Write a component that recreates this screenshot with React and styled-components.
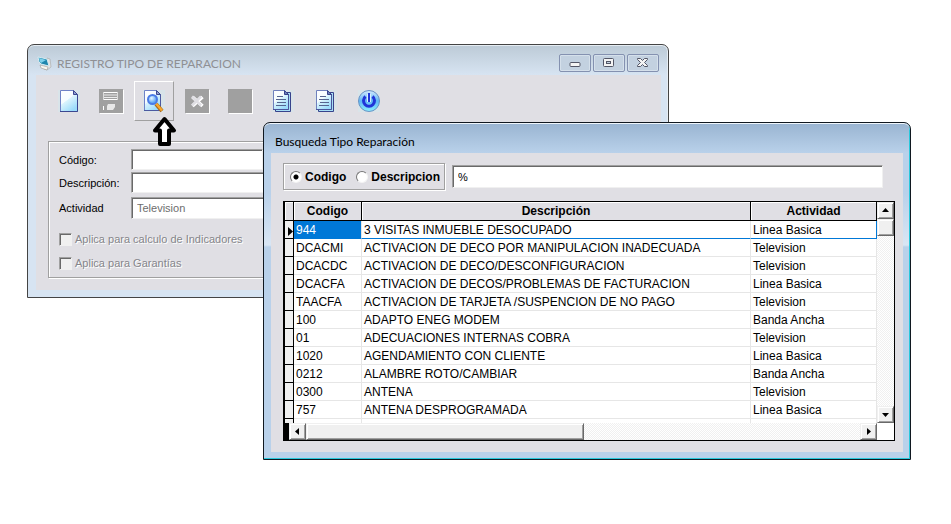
import React, { useState } from "react";
import styled, { createGlobalStyle, css } from "styled-components";

const GlobalStyle = createGlobalStyle`
  *, *::before, *::after { box-sizing: border-box; }
  body { margin: 0; background: #fff; }
  button, input { font: inherit; }
`;

const uiFont = `Lato, "Open Sans", sans-serif`;
const sans = `"Liberation Sans", Arial, sans-serif`;

const Desktop = styled.main`
  position: relative;
  min-height: 100vh;
  min-width: 720px;
  background: #fff;
  font: 12px/16px ${sans};
  color: #000;
`;

const Window = styled.section`
  position: absolute;
  border: 1px solid #444;
  border-radius: 7px 7px 0 0;
  padding: 0 7px 7px 8px;
`;

const MainWindow = styled(Window)`
  top: 44px;
  left: 27px;
  right: 282px;
  background: linear-gradient(#bccad6, #d7e4f2 30px);
  box-shadow: inset 0 1px #e6edf3, inset -1px 0 #e6edf3;
`;

const SearchWindow = styled(Window)`
  top: 122px;
  left: 263px;
  right: 40px;
  border-color: #101820;
  padding-left: 7px;
  background: linear-gradient(#99b4d1, #b9d1ea 30px, #b9d1ea 70px, #d9e6f4 122px, #b9d1ea 124px);
  box-shadow: inset 0 1px #eef5fb, inset -1px -1px #28c8dc;
`;

const TitleBar = styled.header`
  display: flex;
  align-items: center;
  height: 30px;
  font: 12px/16px ${uiFont};
`;

const MainTitle = styled.h1`
  flex: 1;
  margin: 0 0 0 5px;
  padding-top: 8px;
  font: inherit;
  color: #8f9094;
`;

const SearchTitle = styled.h2`
  margin: 0 4px;
  padding-top: 8px;
  font: inherit;
`;

const AppIcon = styled.svg`
  margin: 7px 0 0 1px;
`;

const CaptionButtons = styled.div`
  display: flex;
  gap: 2px;
  padding: 6px 2px 0 0;
`;

const CaptionButton = styled.button`
  display: grid;
  place-items: center;
  width: 32px;
  height: 18px;
  padding: 0;
  border: 1px solid #8491b0;
  border-radius: 2px;
  background: #c3d1e0;
  box-shadow: inset 0 0 0 1px #d5e0eb;
`;

const Client = styled.div`
  background: #e0dfe4;
`;

const MainClient = styled(Client)`
  padding: 6px 12px 12px;
`;

const Toolbar = styled.div`
  display: flex;
  gap: 3px;
  padding-bottom: 20px;
`;

const ToolButton = styled.button`
  display: grid;
  place-items: center;
  width: 40px;
  height: 40px;
  padding: 0;
  border: 1px solid transparent;
  background: none;
  ${(p) => p.$raised && css`border-color: #fff #a0a0a0 #a0a0a0 #fff;`}
`;

const GroupBox = styled.div`
  border: 1px solid #a0a0a0;
  box-shadow: 1px 1px #fff, inset 1px 1px #fff;
  padding: 7px 12px 2px 10px;
  font: 11px/16px ${sans};
`;

const Field = styled.div`
  display: grid;
  grid-template-columns: 72px minmax(0, ${(p) => p.$width || "1fr"});
  align-items: center;
  margin-bottom: ${(p) => p.$gap || 2}px;
`;

const sunken = css`
  border: 1px solid;
  border-color: #a0a0a0 #f0f0f0 #f0f0f0 #a0a0a0;
  box-shadow: inset 1px 1px #696969;
  border-radius: 0;
  background: #fff;
  outline: none;
`;

const TextBox = styled.input`
  ${sunken}
  width: 100%;
  min-width: 0;
  height: ${(p) => p.$height || 21}px;
  padding: 0 5px;
  color: #000;
  font-size: 11px;
  &:disabled { color: #6d6d6d; }
`;

const Check = styled.label`
  display: flex;
  align-items: center;
  gap: 3px;
  height: 24px;
  color: #85858a;
  text-shadow: 1px 1px #fff;
`;

const CheckBox = styled.input`
  ${sunken}
  appearance: none;
  width: 13px;
  height: 13px;
  margin: 0;
  background: #f0f0f0;
`;

const Pointer = styled.svg`
  position: absolute;
  top: 116px;
  left: 153px;
`;

const SearchClient = styled(Client)`
  padding: 10px 8px 11px 12px;
`;

const SearchBar = styled.div`
  display: flex;
  align-items: center;
  gap: 7px;
  padding-right: 12px;
`;

const RadioBox = styled.fieldset`
  display: flex;
  align-items: center;
  gap: 10px;
  height: 27px;
  margin: 0;
  padding: 0 4px 0 6px;
  border: 1px solid #a0a0a0;
  box-shadow: 1px 1px #fff, inset 1px 1px #fff;
  font-weight: 700;
`;

const RadioLabel = styled.label`
  display: flex;
  align-items: center;
  gap: 3px;
`;

const Radio = styled.input`
  appearance: none;
  width: 12px;
  height: 12px;
  margin: 0;
  border: 1px solid;
  border-color: #777 #f4f4f4 #f4f4f4 #777;
  border-radius: 50%;
  background: #fff;
  &:checked { background: radial-gradient(circle, #000 0 2px, #fff 3px); }
`;

const GridFrame = styled.div`
  display: grid;
  grid-template-columns: minmax(0, 1fr) 17px;
  margin-top: 11px;
  border: 1px solid #000;
  border-left-width: 2px;
  background: #fff;
`;

const Table = styled.table`
  width: 100%;
  table-layout: fixed;
  border-collapse: separate;
  border-spacing: 0;
`;

const Col = styled.col`
  width: ${(p) => p.$width};
`;

const HeadCell = styled.th`
  height: 19px;
  padding: 0;
  border-right: 1px solid #000;
  border-bottom: 1px solid #000;
  background: #e0dfe4;
  box-shadow: inset 1px 1px #fff;
  line-height: 16px;
`;

const Marker = styled.td`
  height: 18px;
  padding: 0;
  border-right: 1px solid #000;
  border-bottom: 1px solid #000;
  background: #f0f0f0;
  svg { display: block; margin: 3px 0 0 3px; }
`;

const Cell = styled.td`
  height: 18px;
  padding: 0 2px;
  border-right: 1px solid #e6e6e6;
  border-bottom: 1px solid #e6e6e6;
  overflow: hidden;
  white-space: nowrap;
  line-height: 16px;
  ${(p) => p.$current && css`
    border-bottom-color: #0078d7;
    &:last-child { border-right-color: #0078d7; }
  `}
  ${(p) => p.$selected && css`background: #0078d7; color: #fff;`}
`;

const StubCell = styled.td`
  height: 4px;
  padding: 0;
  border-right: 1px solid ${(p) => (p.$marker ? "#000" : "#e6e6e6")};
  background: ${(p) => (p.$marker ? "#f0f0f0" : "#fff")};
`;

const track = css`
  background: repeating-conic-gradient(#f0f0f0 0 25%, #fff 0 50%) 0 0 / 2px 2px;
`;

const raised = css`
  border: 1px solid;
  border-color: #f0f0f0 #696969 #696969 #f0f0f0;
  box-shadow: inset 1px 1px #fff, inset -1px -1px #a0a0a0;
  background: #f0f0f0;
`;

const VScroll = styled.div`
  display: flex;
  flex-direction: column;
  ${track}
`;

const HScroll = styled.div`
  display: flex;
  ${track}
`;

const ScrollButton = styled.button`
  ${raised}
  display: grid;
  place-items: center;
  flex: none;
  width: 17px;
  height: 17px;
  padding: 0;
  ${(p) => p.$end && css`margin-${p.$end}: auto;`}
`;

const VThumb = styled.div`
  ${raised}
  height: 17px;
`;

const HThumb = styled.div`
  ${raised}
  width: 47%;
`;

const HScrollStart = styled.div`
  width: 4px;
  background: #000;
`;

function Triangle({ dir }) {
  const d = {
    up: "M1 6h7L4.500 2z",
    down: "M1 3h7L4.500 7z",
    left: "M6 1v7L2 4.500z",
    right: "M3 1v7L7 4.500z",
  }[dir];
  return <svg width="9" height="9" viewBox="0 0 9 9"><path d={d} /></svg>;
}

function SheetDefs() {
  return (
    <svg width="0" height="0" style={undefined} aria-hidden="true">
      <defs>
        <linearGradient id="sheet" x1="0" y1="0" x2=".6" y2="1">
          <stop offset="0" stopColor="#fff" />
          <stop offset=".5" stopColor="#f5fcff" />
          <stop offset=".52" stopColor="#dcf4fd" />
          <stop offset="1" stopColor="#9bdcfb" />
        </linearGradient>
        <radialGradient id="lens" cx=".4" cy=".35">
          <stop offset="0" stopColor="#eafaff" />
          <stop offset="1" stopColor="#63a9f5" />
        </radialGradient>
        <linearGradient id="power" x1="0" y1="0" x2="0" y2="1">
          <stop offset="0" stopColor="#d4ecff" />
          <stop offset=".5" stopColor="#5fb7f5" />
          <stop offset="1" stopColor="#8cf0ff" />
        </linearGradient>
      </defs>
    </svg>
  );
}

const HiddenDefs = styled.div`
  position: absolute;
  width: 0;
  height: 0;
  overflow: hidden;
`;

function NewIcon() {
  return (
    <svg width="24" height="24" viewBox="0 0 24 24">
      <path d="M2 1h22v22H2z" fill="#d3e7ec" opacity=".6" />
      <path d="M4.500 1.500h13l4 4v17h-17z" fill="url(#sheet)" stroke="#6f82c6" />
      <path d="M4 22.500h17.500V6" fill="none" stroke="#3b4790" />
      <path d="M17.500 1.500v4h4z" fill="#8f9fd0" stroke="#3b4790" />
    </svg>
  );
}

function SearchIcon() {
  return (
    <svg width="24" height="24" viewBox="0 0 24 24">
      <path d="M1 1h22v22H1z" fill="#d3e7ec" opacity=".6" />
      <path d="M2.500 1.500h12l4 4v16h-16z" fill="url(#sheet)" stroke="#6f82c6" />
      <path d="M2 21.500h16.500V6" fill="none" stroke="#4c59a0" />
      <path d="M14.500 1.500v4h4z" fill="#8f9fd0" stroke="#3b4790" />
      <path d="M14 15l6 7" stroke="#a5641a" strokeWidth="4" />
      <path d="M14 14.500l6 7" stroke="#f7a72b" strokeWidth="2.500" />
      <circle cx="10.500" cy="10.500" r="4.500" fill="url(#lens)" stroke="#4a7be6" strokeWidth="2" />
    </svg>
  );
}

function DocsIcon() {
  return (
    <svg width="24" height="24" viewBox="0 0 24 24">
      <path d="M1 1h22v22H1z" fill="#d3e7ec" opacity=".5" />
      <path d="M4.500 3.500h15v19h-15z" fill="#a7def5" stroke="#37438c" />
      <path d="M2.500 1.500h11l4 4v15h-15z" fill="url(#sheet)" stroke="#7080bd" />
      <path d="M2 20.500h15.500V5" fill="none" stroke="#4a569c" />
      <path d="M13.500 1.500v4h4z" fill="#6f7fb8" stroke="#37438c" />
      <path d="M6 7.500h6M5 10.500h10M6 13.500h9M5 16.500h10" stroke="#56648f" />
    </svg>
  );
}

function DisabledIcon({ kind }) {
  return (
    <svg width="25" height="25" viewBox="0 0 25 25">
      <path d="M1 1h24v24H1z" fill="#fff" />
      <path d="M0 0h24v24H0z" fill="#a0a0a0" />
      {kind === "save" && (
        <>
          <path d="M4 3.500h15M4 10.500h15" stroke="#fff" />
          <path d="M5 6h13M5 8.500h13" stroke="#ececec" />
          <path d="M4.500 3v8M18.500 3v8" stroke="#dcdcdc" />
          <path d="M9 15h7v3l-2 3H8v-4z" fill="#e8e8e8" />
          <path d="M4.500 17v4" stroke="#fff" />
        </>
      )}
      {kind === "delete" && (
        <>
          <path d="M7.500 8l10 9M17.500 8l-10 9" stroke="#fff" strokeWidth="3.500" />
          <path d="M7 7.500l9 9M16 7.500l-9 9" stroke="#e0dfe4" strokeWidth="2.500" />
        </>
      )}
    </svg>
  );
}

function PowerIcon() {
  return (
    <svg width="24" height="24" viewBox="0 0 24 24">
      <path d="M1 1h22v22H1z" fill="#d3e7ec" opacity=".6" />
      <circle cx="12" cy="12" r="10.500" fill="url(#power)" stroke="#6a92c4" />
      <path d="M8.500 7.500a5.500 5.500 0 1 0 7 0" fill="none" stroke="#2036d8" strokeWidth="3" />
      <path d="M12 5v8" stroke="#d9efff" strokeWidth="4" />
      <path d="M12 4v9" stroke="#2036d8" strokeWidth="2" />
    </svg>
  );
}

const tools = [
  { label: "Nuevo", icon: <NewIcon /> },
  { label: "Guardar", icon: <DisabledIcon kind="save" /> },
  { label: "Buscar", icon: <SearchIcon />, raised: true },
  { label: "Eliminar", icon: <DisabledIcon kind="delete" /> },
  { label: "Imprimir", icon: <DisabledIcon /> },
  { label: "Reporte", icon: <DocsIcon /> },
  { label: "Listado", icon: <DocsIcon /> },
  { label: "Salir", icon: <PowerIcon /> },
];

const rows = [
  ["944", "3 VISITAS INMUEBLE DESOCUPADO", "Linea Basica"],
  ["DCACMI", "ACTIVACION DE DECO POR MANIPULACION INADECUADA", "Television"],
  ["DCACDC", "ACTIVACION DE DECO/DESCONFIGURACION", "Television"],
  ["DCACFA", "ACTIVACION DE DECOS/PROBLEMAS DE FACTURACION", "Linea Basica"],
  ["TAACFA", "ACTIVACION DE TARJETA /SUSPENCION DE NO PAGO", "Television"],
  ["100", "ADAPTO ENEG MODEM", "Banda Ancha"],
  ["01", "ADECUACIONES INTERNAS COBRA", "Television"],
  ["1020", "AGENDAMIENTO CON CLIENTE", "Linea Basica"],
  ["0212", "ALAMBRE ROTO/CAMBIAR", "Banda Ancha"],
  ["0300", "ANTENA", "Television"],
  ["757", "ANTENA DESPROGRAMADA", "Linea Basica"],
];

function RegisterWindow() {
  return (
    <MainWindow>
      <TitleBar>
        <AppIcon width="15" height="15" viewBox="0 0 15 15">
          <path d="M10 2l3 1 1 8-4 3-3-1z" fill="#e4e4e4" stroke="#9a9a98" strokeWidth=".5" />
          <path d="M3 9l8 2-1 3-6-2z" fill="#f8f6f0" stroke="#8f8c86" strokeWidth=".5" />
          <path d="M1 1l9 2 2 7-8-2-2-2z" fill="#1f86ad" stroke="#d5ecf3" />
          <path d="M2 2l7 2-5 3-1-1z" fill="#7fd0ea" />
        </AppIcon>
        <MainTitle>REGISTRO TIPO DE REPARACION</MainTitle>
        <CaptionButtons>
          <CaptionButton aria-label="Minimizar">
            <svg width="12" height="12" viewBox="0 0 12 12">
              <rect x="1" y="5.500" width="10" height="4" rx="1" fill="#f4f4f4" stroke="#535666" />
            </svg>
          </CaptionButton>
          <CaptionButton aria-label="Maximizar">
            <svg width="12" height="12" viewBox="0 0 12 12">
              <rect x=".5" y="1.500" width="10" height="8" rx="1" fill="#f4f4f4" stroke="#535666" />
              <rect x="3.500" y="4.500" width="4" height="2" fill="#c3d1e0" stroke="#535666" />
            </svg>
          </CaptionButton>
          <CaptionButton aria-label="Cerrar">
            <svg width="12" height="12" viewBox="0 0 12 12">
              <path d="M.5 1.500h3l2 2 2-2h3v1L7.500 5.500l3 3v1h-3l-2-2-2 2h-3v-1l3-3-3-3z" fill="#f4f4f4" stroke="#535666" />
            </svg>
          </CaptionButton>
        </CaptionButtons>
      </TitleBar>
      <MainClient>
        <Toolbar>
          {tools.map((t) => (
            <ToolButton key={t.label} aria-label={t.label} $raised={t.raised}>{t.icon}</ToolButton>
          ))}
        </Toolbar>
        <GroupBox>
          <Field $width="132px">
            <label htmlFor="codigo">Código:</label>
            <TextBox id="codigo" />
          </Field>
          <Field $gap={4}>
            <label htmlFor="descripcion">Descripción:</label>
            <TextBox id="descripcion" />
          </Field>
          <Field $gap={8}>
            <label htmlFor="actividad">Actividad</label>
            <TextBox id="actividad" defaultValue="Television" disabled $height={22} />
          </Field>
          <Check><CheckBox type="checkbox" disabled />Aplica para calculo de Indicadores</Check>
          <Check><CheckBox type="checkbox" disabled />Aplica para Garantías</Check>
        </GroupBox>
      </MainClient>
    </MainWindow>
  );
}

function SearchDialog() {
  const [mode, setMode] = useState("Codigo");
  return (
    <SearchWindow>
      <TitleBar><SearchTitle>Busqueda Tipo Reparación</SearchTitle></TitleBar>
      <SearchClient>
        <SearchBar>
          <RadioBox aria-label="Buscar por">
            {["Codigo", "Descripcion"].map((m) => (
              <RadioLabel key={m}>
                <Radio type="radio" name="modo" checked={mode === m} onChange={() => setMode(m)} />
                {m}
              </RadioLabel>
            ))}
          </RadioBox>
          <TextBox aria-label="Texto a buscar" defaultValue="%" $height={23} />
        </SearchBar>
        <GridFrame>
          <Table>
            <colgroup>
              <Col $width="9px" />
              <Col $width="68px" />
              <Col $width="auto" />
              <Col $width="126px" />
            </colgroup>
            <thead>
              <tr>
                <HeadCell aria-label="Fila actual" />
                <HeadCell>Codigo</HeadCell>
                <HeadCell>Descripción</HeadCell>
                <HeadCell>Actividad</HeadCell>
              </tr>
            </thead>
            <tbody>
              {rows.map(([code, description, activity], i) => (
                <tr key={code}>
                  <Marker>
                    {i === 0 && <svg width="5" height="9" viewBox="0 0 5 9"><path d="M0 0v9l5-4.500z" /></svg>}
                  </Marker>
                  <Cell $current={i === 0} $selected={i === 0}>{code}</Cell>
                  <Cell $current={i === 0}>{description}</Cell>
                  <Cell $current={i === 0}>{activity}</Cell>
                </tr>
              ))}
              <tr aria-hidden="true">
                <StubCell $marker />
                <StubCell />
                <StubCell />
                <StubCell />
              </tr>
            </tbody>
          </Table>
          <VScroll>
            <ScrollButton aria-label="Subir"><Triangle dir="up" /></ScrollButton>
            <VThumb />
            <ScrollButton aria-label="Bajar" $end="top"><Triangle dir="down" /></ScrollButton>
          </VScroll>
          <HScroll>
            <HScrollStart />
            <ScrollButton aria-label="Izquierda"><Triangle dir="left" /></ScrollButton>
            <HThumb />
            <ScrollButton aria-label="Derecha" $end="left"><Triangle dir="right" /></ScrollButton>
          </HScroll>
        </GridFrame>
      </SearchClient>
    </SearchWindow>
  );
}

export default function App() {
  return (
    <Desktop>
      <GlobalStyle />
      <HiddenDefs><SheetDefs /></HiddenDefs>
      <RegisterWindow />
      <Pointer width="24" height="31" viewBox="0 0 24 31" aria-hidden="true">
        <path d="M11.500 3L21 14.500h-5V28H7V14.500H2z" fill="#fff" stroke="#000" strokeWidth="4" strokeLinejoin="round" />
      </Pointer>
      <SearchDialog />
    </Desktop>
  );
}
